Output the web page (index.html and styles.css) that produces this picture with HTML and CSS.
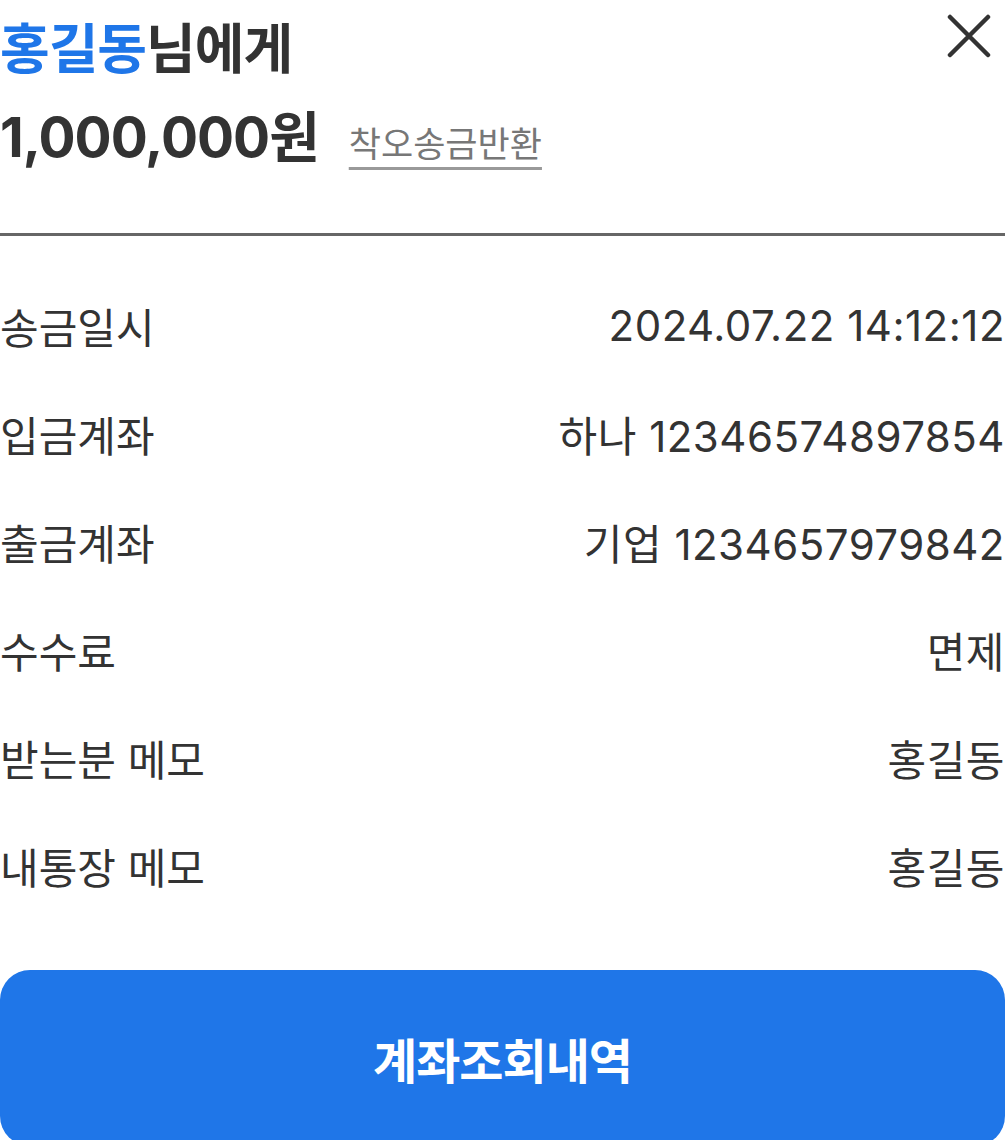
FILE: index.html
```html
<!DOCTYPE html>
<html lang="ko">
<head>
<meta charset="utf-8">
<link rel="stylesheet" href="styles.css">
</head>
<body>
<div class="sheet">
  <header class="head">
    <div class="head-main">
      <h1 class="title"><span class="name">홍길동</span>님에게</h1>
      <div class="amount-line">
        <span class="amount">1,000,000원</span>
        <a class="return-link">착오송금반환</a>
      </div>
    </div>
    <button class="close" aria-label="닫기">
      <svg width="44" height="44" viewBox="0 0 44 44"><path d="M3 3 L41 41 M41 3 L3 41" stroke="#333" stroke-width="4.5" stroke-linecap="round" fill="none"/></svg>
    </button>
  </header>
  <div class="divider"></div>
  <dl class="rows">
    <div class="row"><dt>송금일시</dt><dd>2024.07.22 14:12:12</dd></div>
    <div class="row"><dt>입금계좌</dt><dd>하나 12346574897854</dd></div>
    <div class="row"><dt>출금계좌</dt><dd>기업 1234657979842</dd></div>
    <div class="row"><dt>수수료</dt><dd>면제</dd></div>
    <div class="row"><dt>받는분 메모</dt><dd>홍길동</dd></div>
    <div class="row"><dt>내통장 메모</dt><dd>홍길동</dd></div>
  </dl>
  <button class="primary">계좌조회내역</button>
</div>
</body>
</html>
```
FILE: styles.css
```css
* { box-sizing: border-box; }
html, body { margin: 0; padding: 0; background: #fff; }
body {
  font-family: Inter, "Noto Sans CJK KR", sans-serif;
  color: #333;
}
.sheet {
  width: 1005px;
  display: flex;
  flex-direction: column;
}
.head {
  display: flex;
  justify-content: space-between;
  align-items: flex-start;
  height: 233px;
}
.head-main {
  display: flex;
  flex-direction: column;
}
.title {
  margin: 0;
  margin-top: 12px;
  font-size: 54px;
  font-weight: 700;
  line-height: 76px;
  letter-spacing: -1px;
}
.name { color: #1f76e8; }
.amount-line {
  display: flex;
  align-items: baseline;
  gap: 30px;
  margin-top: 11px;
}
.amount {
  font-size: 55px;
  font-weight: 700;
  line-height: 76px;
  letter-spacing: -1px;
}
.return-link {
  font-size: 35px;
  color: #777;
  text-decoration: underline;
  text-decoration-color: #999;
  text-decoration-thickness: 3px;
  text-underline-offset: 10px;
}
.close {
  border: 0;
  background: none;
  padding: 0;
  margin: 14px 14px 0 0;
  width: 44px;
  height: 44px;
  display: flex;
}
.divider {
  height: 3px;
  background: #666;
}
.rows {
  margin: 0;
  padding: 35px 0 0;
  display: flex;
  flex-direction: column;
}
.row {
  display: flex;
  justify-content: space-between;
  align-items: center;
  height: 108px;
  font-size: 42px;
}
.row dt, .row dd { margin: 0; }
.row dd { letter-spacing: 0.5px; }
.primary {
  margin-top: 51px;
  height: 176px;
  border: 0;
  border-radius: 30px;
  background: #1f76e8;
  color: #fff;
  font-family: Inter, "Noto Sans CJK KR", sans-serif;
  font-size: 48px;
  font-weight: 700;
  letter-spacing: -1px;
}
```
